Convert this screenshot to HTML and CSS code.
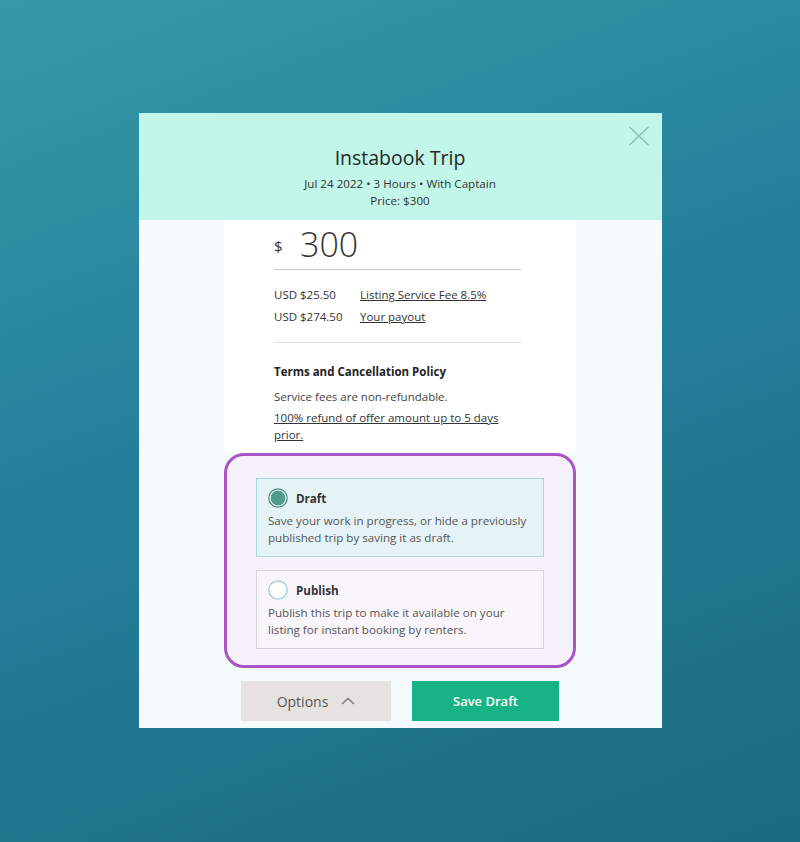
FILE: index.html
```html
<!DOCTYPE html>
<html lang="en">
<head>
  <meta charset="UTF-8" />
  <meta name="viewport" content="width=device-width, initial-scale=1.0"/>
  <title>Instabook Trip</title>
  <link rel="stylesheet" href="styles.css">
</head>
<body>
  <div class="modal">
    <div class="modal-header">
      <button class="close" aria-label="Close">
        <svg width="22" height="20" viewBox="0 0 22 20">
          <path d="M1.5 1 L20.5 19 M20.5 1 L1.5 19" stroke="#8fbdb1" stroke-width="1.4" fill="none"/>
        </svg>
      </button>
      <h1>Instabook Trip</h1>
      <div class="meta">Jul 24 2022 &bull; 3 Hours &bull; With Captain</div>
      <div class="meta">Price: $300</div>
    </div>

    <div class="modal-body">
      <div class="card">
        <div class="amount">
          <span class="currency">$</span>
          <span class="value">300</span>
        </div>

        <div class="fees">
          <div class="fee-row">
            <span class="fee-amount">USD $25.50</span>
            <a href="#">Listing Service Fee 8.5%</a>
          </div>
          <div class="fee-row">
            <span class="fee-amount">USD $274.50</span>
            <a href="#">Your payout</a>
          </div>
        </div>

        <h2>Terms and Cancellation Policy</h2>
        <p class="note">Service fees are non-refundable.</p>
        <p class="note"><a href="#">100% refund of offer amount up to 5 days prior.</a></p>
      </div>

      <div class="choices">
        <label class="choice selected">
          <div class="choice-head">
            <svg width="20" height="20" viewBox="0 0 20 20">
              <circle cx="10" cy="10" r="9.2" fill="#fff" stroke="#3e8c7f" stroke-width="1.2"/>
              <circle cx="10" cy="10" r="7.4" fill="#4f9c8c"/>
            </svg>
            <span class="choice-title">Draft</span>
          </div>
          <div class="choice-text">Save your work in progress, or hide a previously published trip by saving it as draft.</div>
        </label>
        <label class="choice">
          <div class="choice-head">
            <svg width="20" height="20" viewBox="0 0 20 20">
              <circle cx="10" cy="10" r="9.2" fill="#fff" stroke="#a3c8e2" stroke-width="1.3"/>
            </svg>
            <span class="choice-title">Publish</span>
          </div>
          <div class="choice-text">Publish this trip to make it available on your listing for instant booking by renters.</div>
        </label>
      </div>

      <div class="actions">
        <button class="btn btn-options">
          Options
          <svg width="14" height="8" viewBox="0 0 14 8">
            <path d="M1 7 L7 1.5 L13 7" stroke="#777" stroke-width="1.3" fill="none"/>
          </svg>
        </button>
        <button class="btn btn-save">Save Draft</button>
      </div>
    </div>
  </div>
</body>
</html>
```

FILE: styles.css
```css
body {
  margin: 0;
  height: 842px;
  font-family: "Open Sans", Arial, sans-serif;
  color: #333;
  background: linear-gradient(160deg, #3699a8 0%, #24809a 45%, #1a6b80 100%);
}
.modal {
  width: 523px;
  margin: 0 auto;
  position: relative;
  top: 113px;
  background: #f5fafb;
}
.modal-header {
  position: relative;
  height: 107px;
  box-sizing: border-box;
  padding-top: 31px;
  background: #c1f6e8;
  text-align: center;
}
.close {
  position: absolute;
  top: 13px;
  right: 12px;
  padding: 0;
  border: none;
  background: none;
}
h1 {
  margin: 0 0 3px;
  font-size: 19.5px;
  line-height: 28px;
  font-weight: 400;
  color: #1e2a2a;
}
.meta {
  font-size: 11.6px;
  line-height: 17px;
  color: #333;
}
.modal-body {
  padding-bottom: 7px;
}
.card {
  width: 352px;
  margin: 0 auto;
  box-sizing: border-box;
  padding: 2px 55px 10px 50px;
  background: #fff;
}
.amount {
  display: flex;
  align-items: center;
  height: 44px;
  line-height: 44px;
  padding-bottom: 3px;
  border-bottom: 1px solid #c9c9c9;
}
.currency {
  font-size: 15px;
  width: 26px;
  padding-top: 3px;
  color: #333;
}
.value {
  font-size: 34px;
  font-weight: 300;
  color: #333;
}
.fees {
  padding: 14px 0;
  border-bottom: 1px solid #dcdcdc;
}
.fee-row {
  display: flex;
  font-size: 11.5px;
  line-height: 22px;
}
.fee-amount {
  width: 86px;
}
a {
  color: #333;
  text-decoration: underline;
}
h2 {
  margin: 19px 0 0;
  font-size: 11.5px;
  line-height: 20px;
  font-weight: 700;
  color: #222;
}
.note {
  margin: 6px 0 0;
  font-size: 11.5px;
  line-height: 17px;
  color: #444;
}
.note + .note {
  margin-top: 4px;
}
.choices {
  width: 352px;
  margin: 0 auto;
  box-sizing: border-box;
  padding: 22px 29px 16px;
  border: 3px solid #aa55c6;
  border-radius: 20px;
  background: #f6f2fb;
  display: flex;
  flex-direction: column;
  gap: 13px;
}
.choice {
  display: block;
  padding: 9px 8px 10px 11px;
  border: 1px solid #d7d3d8;
  background: #f8f5fb;
}
.choice.selected {
  border-color: #a7dcdc;
  background: #e5f3f6;
}
.choice-head {
  display: flex;
  align-items: center;
  gap: 8px;
  height: 20px;
}
.choice-title {
  font-size: 11.6px;
  font-weight: 700;
  color: #333;
}
.choice-text {
  margin-top: 4px;
  font-size: 11.6px;
  line-height: 17px;
  color: #555;
}
.actions {
  display: flex;
  justify-content: center;
  gap: 21px;
  margin-top: 13px;
}
.btn {
  height: 40px;
  border: none;
  font-family: "Open Sans", Arial, sans-serif;
  font-size: 14px;
}
.btn-options {
  width: 150px;
  background: #e6e2e0;
  color: #555;
  display: flex;
  align-items: center;
  justify-content: center;
  gap: 13px;
}
.btn-save {
  width: 147px;
  background: #17b386;
  color: #fff;
  font-weight: 600;
  font-size: 13px;
}
```
